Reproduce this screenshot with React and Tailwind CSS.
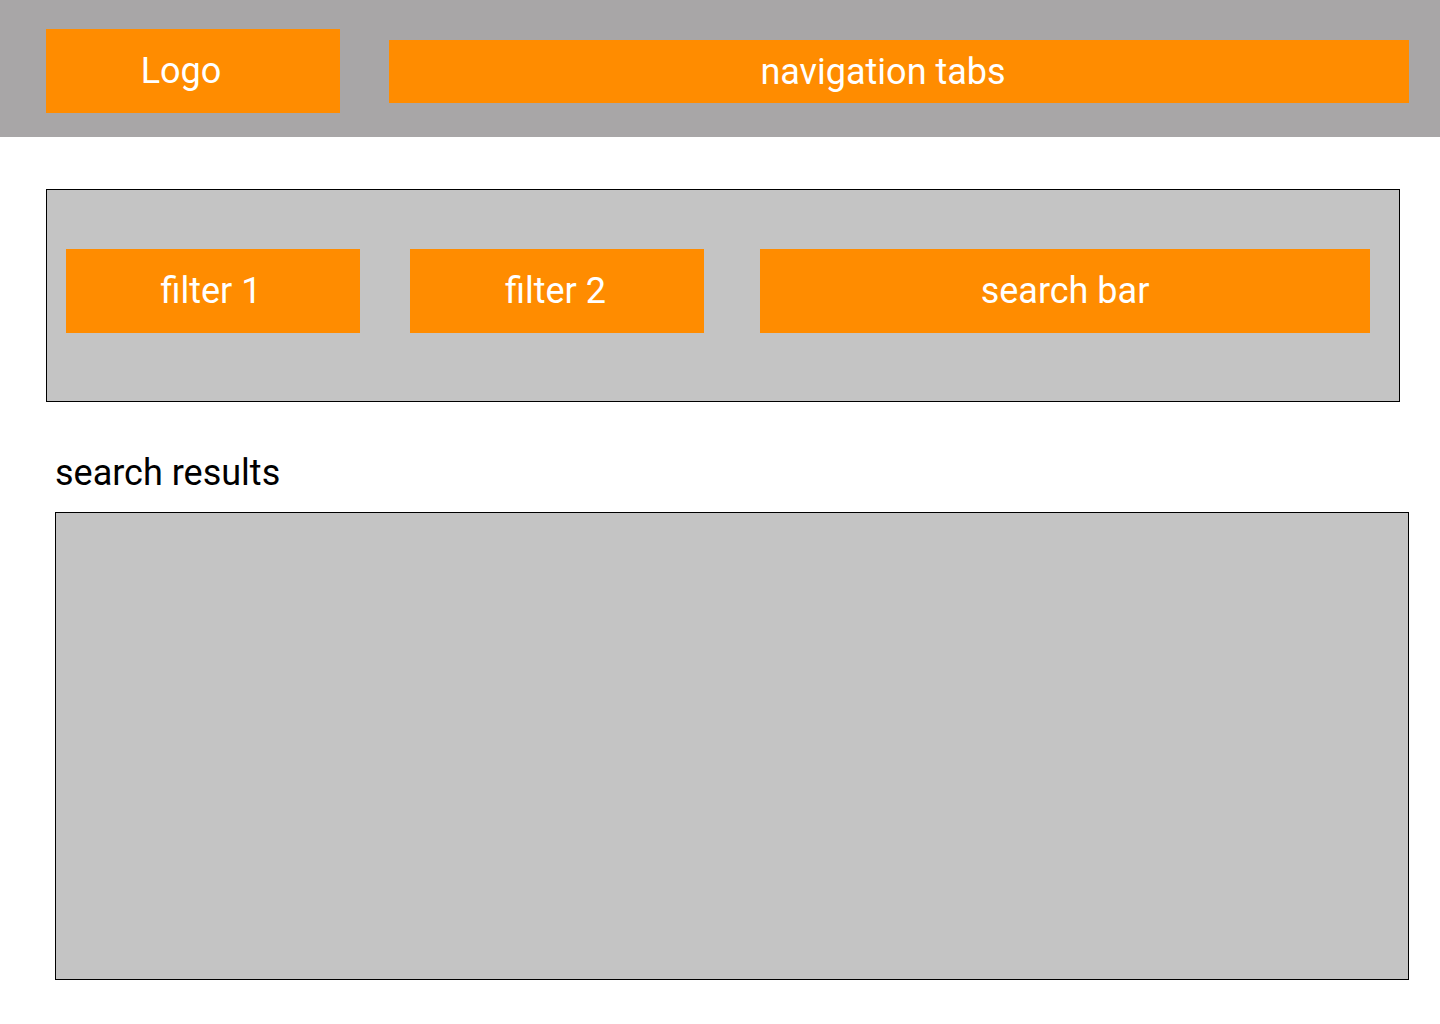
export default function App() {
  const font = { fontFamily: "Roboto, 'Liberation Sans', sans-serif" };
  return (
    <div className="w-[1440px] h-[1024px] bg-white" style={font}>
      <header className="h-[137px] bg-[#a8a6a7] flex items-start">
        <div className="ml-[46px] mt-[29px] w-[294px] h-[84px] bg-[#ff8c00] flex items-center justify-center pr-[24px] text-white text-[36px]">
          Logo
        </div>
        <div className="ml-[49px] mt-[40px] w-[1020px] h-[63px] bg-[#ff8c00] flex items-center justify-center pr-[32px] text-white text-[36px]">
          navigation tabs
        </div>
      </header>
      <section className="ml-[46px] mt-[52px] w-[1354px] h-[213px] border border-black bg-[#c4c4c4] flex items-start pt-[59px] pl-[19px]">
        <div className="w-[294px] h-[84px] bg-[#ff8c00] flex items-center justify-center pr-[4px] text-white text-[36px]">
          filter 1
        </div>
        <div className="ml-[50px] w-[294px] h-[84px] bg-[#ff8c00] flex items-center justify-center pr-[3px] text-white text-[36px]">
          filter 2
        </div>
        <div className="ml-[56px] w-[610px] h-[84px] bg-[#ff8c00] flex items-center justify-center text-white text-[36px]">
          search bar
        </div>
      </section>
      <div className="ml-[55px] mt-[44px] text-[36px] leading-[54px] text-black">search results</div>
      <section className="ml-[55px] mt-[12px] w-[1354px] h-[468px] border border-black bg-[#c4c4c4]"></section>
    </div>
  );
}
